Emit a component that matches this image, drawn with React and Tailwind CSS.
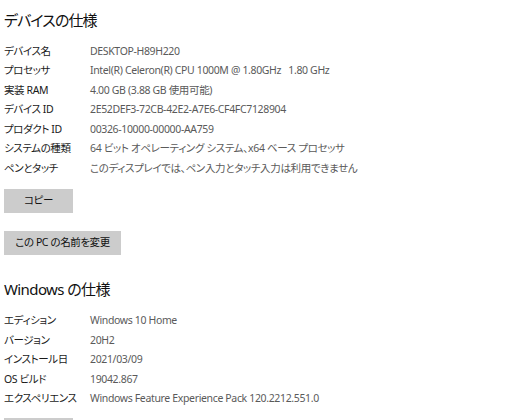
const DEVICE_SPECS = [
  ['デバイス名', 'DESKTOP-H89H220'],
  ['プロセッサ', 'Intel(R) Celeron(R) CPU 1000M @ 1.80GHz   1.80 GHz'],
  ['実装 RAM', '4.00 GB (3.88 GB 使用可能)'],
  ['デバイス ID', '2E52DEF3-72CB-42E2-A7E6-CF4FC7128904'],
  ['プロダクト ID', '00326-10000-00000-AA759'],
  ['システムの種類', '64 ビット オペレーティング システム、x64 ベース プロセッサ'],
  ['ペンとタッチ', 'このディスプレイでは、ペン入力とタッチ入力は利用できません'],
]

const WINDOWS_SPECS = [
  ['エディション', 'Windows 10 Home'],
  ['バージョン', '20H2'],
  ['インストール日', '2021/03/09'],
  ['OS ビルド', '19042.867'],
  ['エクスペリエンス', 'Windows Feature Experience Pack 120.2212.551.0'],
]

function SpecRows({ rows }) {
  return (
    <div className="flex flex-col">
      {rows.map(([label, value]) => (
        <div key={label} className="flex h-[19.5px] items-center text-[10.5px] whitespace-pre">
          <span className="w-[86px] shrink-0 tracking-[-0.4px] text-[#1a1a1a]">{label}</span>
          <span className="tracking-[-0.35px] text-[#5a5a5a]">{value}</span>
        </div>
      ))}
    </div>
  )
}

export default function App() {
  return (
    <div
      className="h-[420px] w-[512px] overflow-hidden bg-white pl-[4px] pt-[8px] [font-feature-settings:'palt']"
      style={{ fontFamily: '"Noto Sans", "Noto Sans CJK JP", sans-serif' }}
    >
      <h2 className="text-[15px] leading-6 tracking-[-0.9px] text-[#111]">デバイスの仕様</h2>
      <div className="mt-[10px]">
        <SpecRows rows={DEVICE_SPECS} />
      </div>
      <button className="mt-[10px] block h-6 w-[69px] bg-[#cccccc] text-[10.5px] tracking-[-0.4px] text-[#111]">
        コピー
      </button>
      <button className="mt-[18px] block h-6 w-[117px] bg-[#cccccc] text-[10.5px] tracking-[-0.4px] text-[#111]">
        この PC の名前を変更
      </button>
      <h2 className="mt-[22px] text-[15px] leading-6 tracking-[-0.6px] text-[#111]">Windows の仕様</h2>
      <div className="mt-[11px]">
        <SpecRows rows={WINDOWS_SPECS} />
      </div>
      <div className="mt-[9px] h-6 w-[69px] bg-[#cccccc]" />
    </div>
  )
}
